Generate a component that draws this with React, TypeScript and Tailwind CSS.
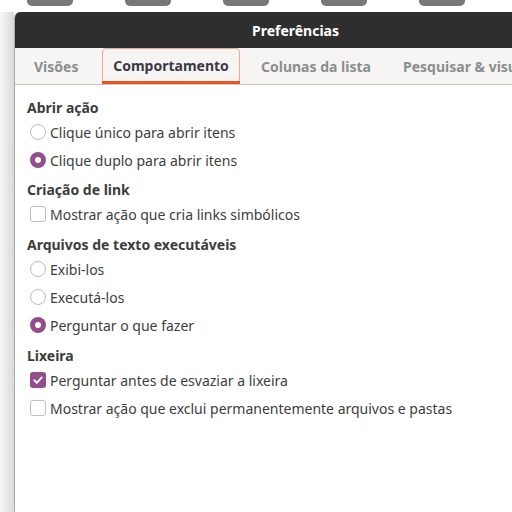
import React from "react";

const font = { fontFamily: '"Noto Sans", "Open Sans", sans-serif' };

function Radio({ checked, label }: { checked?: boolean; label: string }) {
  return (
    <div className="flex items-center h-[28px] pl-[15px]">
      {checked ? (
        <span className="w-[16px] h-[16px] rounded-full bg-[#924d8b] flex items-center justify-center shrink-0">
          <span className="w-[6px] h-[6px] rounded-full bg-white" />
        </span>
      ) : (
        <span className="w-[16px] h-[16px] rounded-full border border-[#c0bdba] bg-white shrink-0" />
      )}
      <span className="ml-[4px] text-[14px] text-[#3d3d3d] whitespace-nowrap">{label}</span>
    </div>
  );
}

function Check({ checked, label }: { checked?: boolean; label: string }) {
  return (
    <div className="flex items-center h-[28px] pl-[15px]">
      {checked ? (
        <span className="w-[16px] h-[16px] rounded-[3px] bg-[#924d8b] flex items-center justify-center shrink-0">
          <svg width="12" height="12" viewBox="0 0 12 12">
            <path d="M2.2 6.2 L4.8 8.8 L9.8 3.4" stroke="white" strokeWidth="1.8" fill="none" strokeLinecap="round" strokeLinejoin="round" />
          </svg>
        </span>
      ) : (
        <span className="w-[16px] h-[16px] rounded-[3px] border border-[#c0bdba] bg-white shrink-0" />
      )}
      <span className="ml-[4px] text-[14px] text-[#3d3d3d] whitespace-nowrap">{label}</span>
    </div>
  );
}

function Heading({ children, top }: { children: React.ReactNode; top: string }) {
  return <div className={`pl-[12px] text-[14px] font-bold text-[#3d3d3d] h-[22px] flex items-center ${top}`}>{children}</div>;
}

export default function App() {
  return (
    <div className="w-[512px] h-[512px] overflow-hidden bg-white flex flex-col" style={font}>
      <div className="h-[12px] flex gap-[52px] pl-[27px] shrink-0">
        {[0, 1, 2, 3, 4].map((i) => (
          <div key={i} className="w-[46px] h-[6px] rounded-b-[5px] bg-[#787878]" />
        ))}
      </div>
      <div className="flex flex-1 min-h-0">
        <div className="w-[14px] shrink-0 bg-gradient-to-r from-[#f6f6f6] to-[#dadada]" />
        <div className="w-[562px] shrink-0 flex flex-col border-l border-[#a8a8a8] rounded-tl-[6px] overflow-hidden bg-white">
          <div className="h-[36px] bg-[#2f2e2e] flex items-center justify-center shrink-0">
            <span className="text-white font-bold text-[14px]">Preferências</span>
          </div>
          <div className="h-[37px] bg-[#f6f5f4] border-b border-[#cdc7c2] flex items-end shrink-0 text-[14px] font-bold whitespace-nowrap">
            <div className="h-[35px] w-[87px] shrink-0 pl-[19px] flex items-center text-[#8b8e8f]">Visões</div>
            <div className="relative h-[35px] w-[138px] shrink-0 flex items-center justify-center text-[#3d3846] border border-[#f4a58a] rounded-t-[4px] rounded-b-[3px] mb-[1px]">
              Comportamento
              <div className="absolute left-[-1px] right-[-1px] bottom-[-2px] h-[3px] bg-[#e95420]" />
            </div>
            <div className="h-[35px] w-[163px] shrink-0 pl-[21px] flex items-center text-[#8b8e8f]">Colunas da lista</div>
            <div className="h-[35px] shrink-0 flex items-center text-[#8b8e8f]">Pesquisar &amp; visualizar</div>
          </div>
          <div className="flex flex-col pt-[11px]">
            <Heading top="">Abrir ação</Heading>
            <Radio label="Clique único para abrir itens" />
            <Radio checked label="Clique duplo para abrir itens" />
            <Heading top="mt-[4px]">Criação de link</Heading>
            <Check label="Mostrar ação que cria links simbólicos" />
            <Heading top="mt-[5px]">Arquivos de texto executáveis</Heading>
            <Radio label="Exibi-los" />
            <Radio label="Executá-los" />
            <Radio checked label="Perguntar o que fazer" />
            <Heading top="mt-[5px]">Lixeira</Heading>
            <Check checked label="Perguntar antes de esvaziar a lixeira" />
            <Check label="Mostrar ação que exclui permanentemente arquivos e pastas" />
          </div>
        </div>
      </div>
    </div>
  );
}
